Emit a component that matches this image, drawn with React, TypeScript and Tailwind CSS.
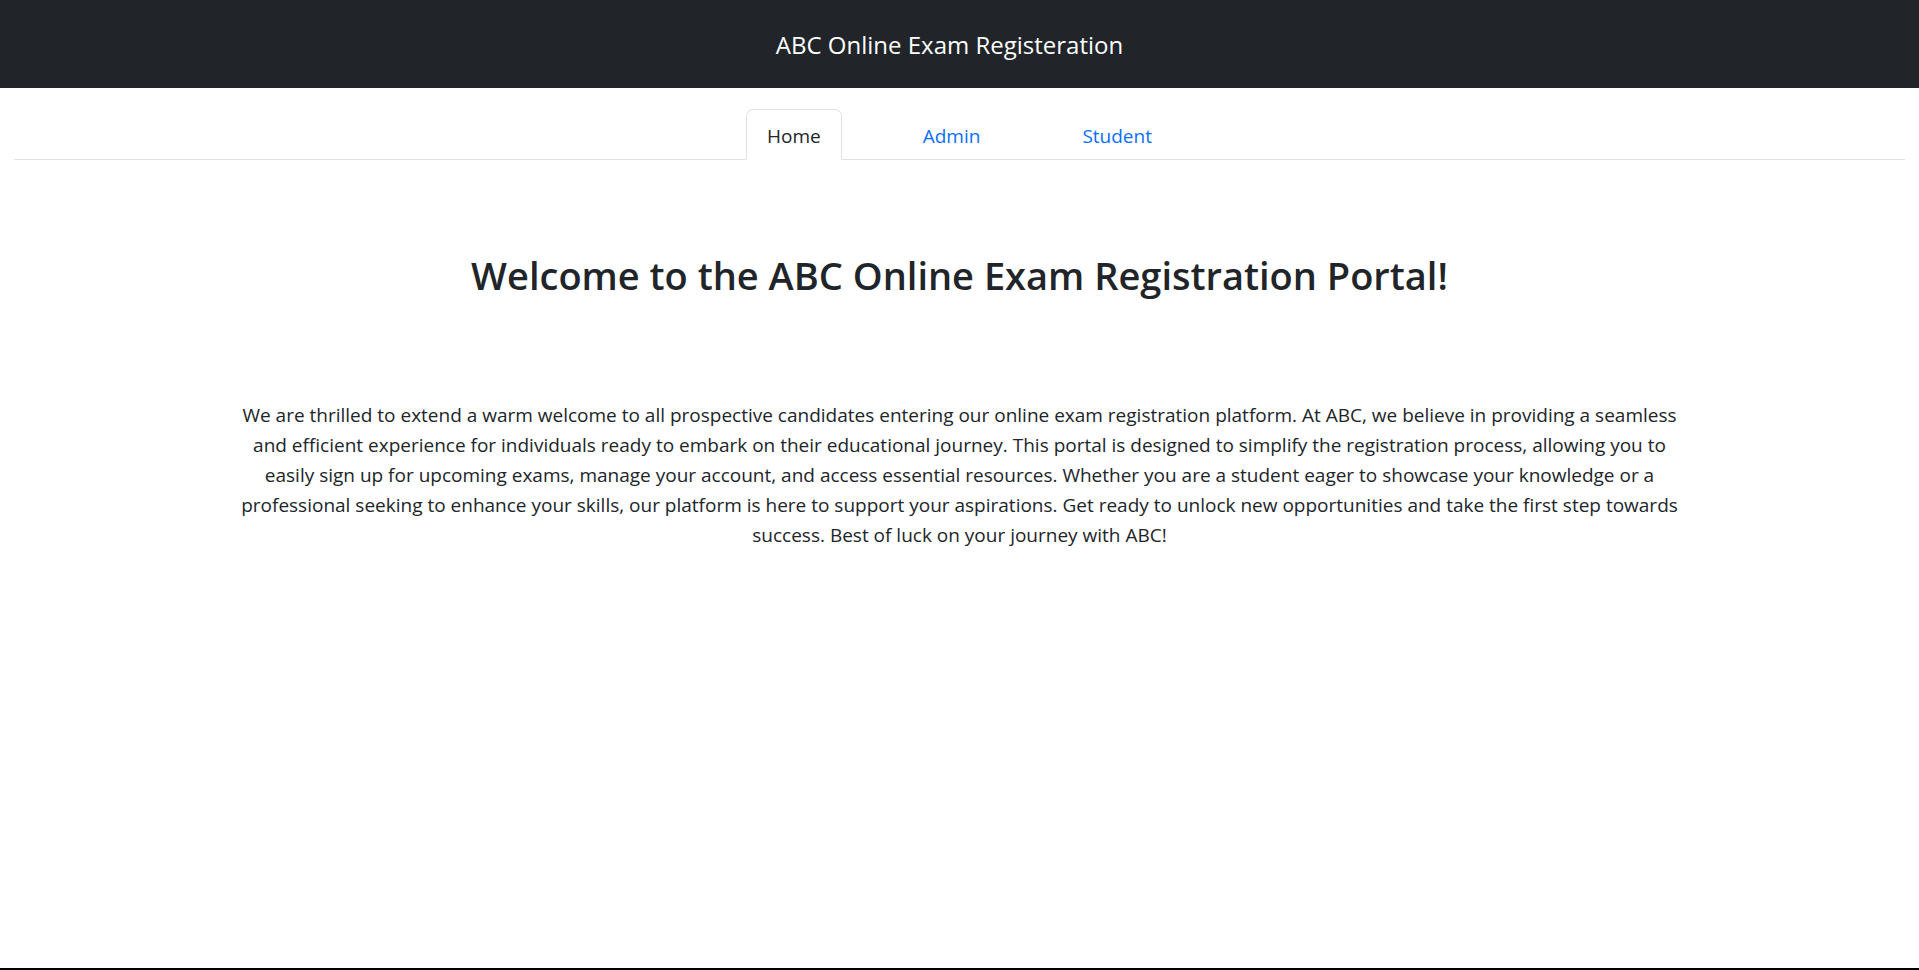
export default function App() {
  const font = { fontFamily: '"Open Sans", "Noto Sans", sans-serif' };
  return (
    <div className="min-h-[970px] bg-white flex flex-col text-[#212529]" style={font}>
      <header className="h-[88px] bg-[#212529] flex items-center justify-center">
        <span className="text-white text-[24px] mr-5 leading-none pt-[2px]">ABC Online Exam Registeration</span>
      </header>
      <nav className="mx-[14px] mt-[21px] border-b border-[#dee2e6] flex justify-center">
        <a className="mx-[30px] -mb-px h-[51px] px-[20px] pt-[3px] flex items-center border border-[#dee2e6] border-b-white rounded-t-[7px] bg-white text-[19px] text-[#212529]">Home</a>
        <a className="mx-[30px] -mb-px h-[51px] px-[20px] pt-[3px] flex items-center border border-transparent text-[19px] text-[#0d6efd]">Admin</a>
        <a className="mx-[30px] -mb-px h-[51px] px-[20px] pt-[3px] flex items-center border border-transparent text-[19px] text-[#0d6efd]">Student</a>
      </nav>
      <main className="flex-1 flex flex-col items-center">
        <h2 className="mt-[93px] text-[38px] font-semibold leading-[1.2]">Welcome to the ABC Online Exam Registration Portal!</h2>
        <p className="mt-[101px] w-[1500px] text-center text-[19px] leading-[30px]">
          We are thrilled to extend a warm welcome to all prospective candidates entering our online exam registration platform. At ABC, we believe in providing a seamless<br />
          and efficient experience for individuals ready to embark on their educational journey. This portal is designed to simplify the registration process, allowing you to<br />
          easily sign up for upcoming exams, manage your account, and access essential resources. Whether you are a student eager to showcase your knowledge or a<br />
          professional seeking to enhance your skills, our platform is here to support your aspirations. Get ready to unlock new opportunities and take the first step towards<br />
          success. Best of luck on your journey with ABC!
        </p>
      </main>
      <div className="h-[2px] bg-black" />
    </div>
  );
}
